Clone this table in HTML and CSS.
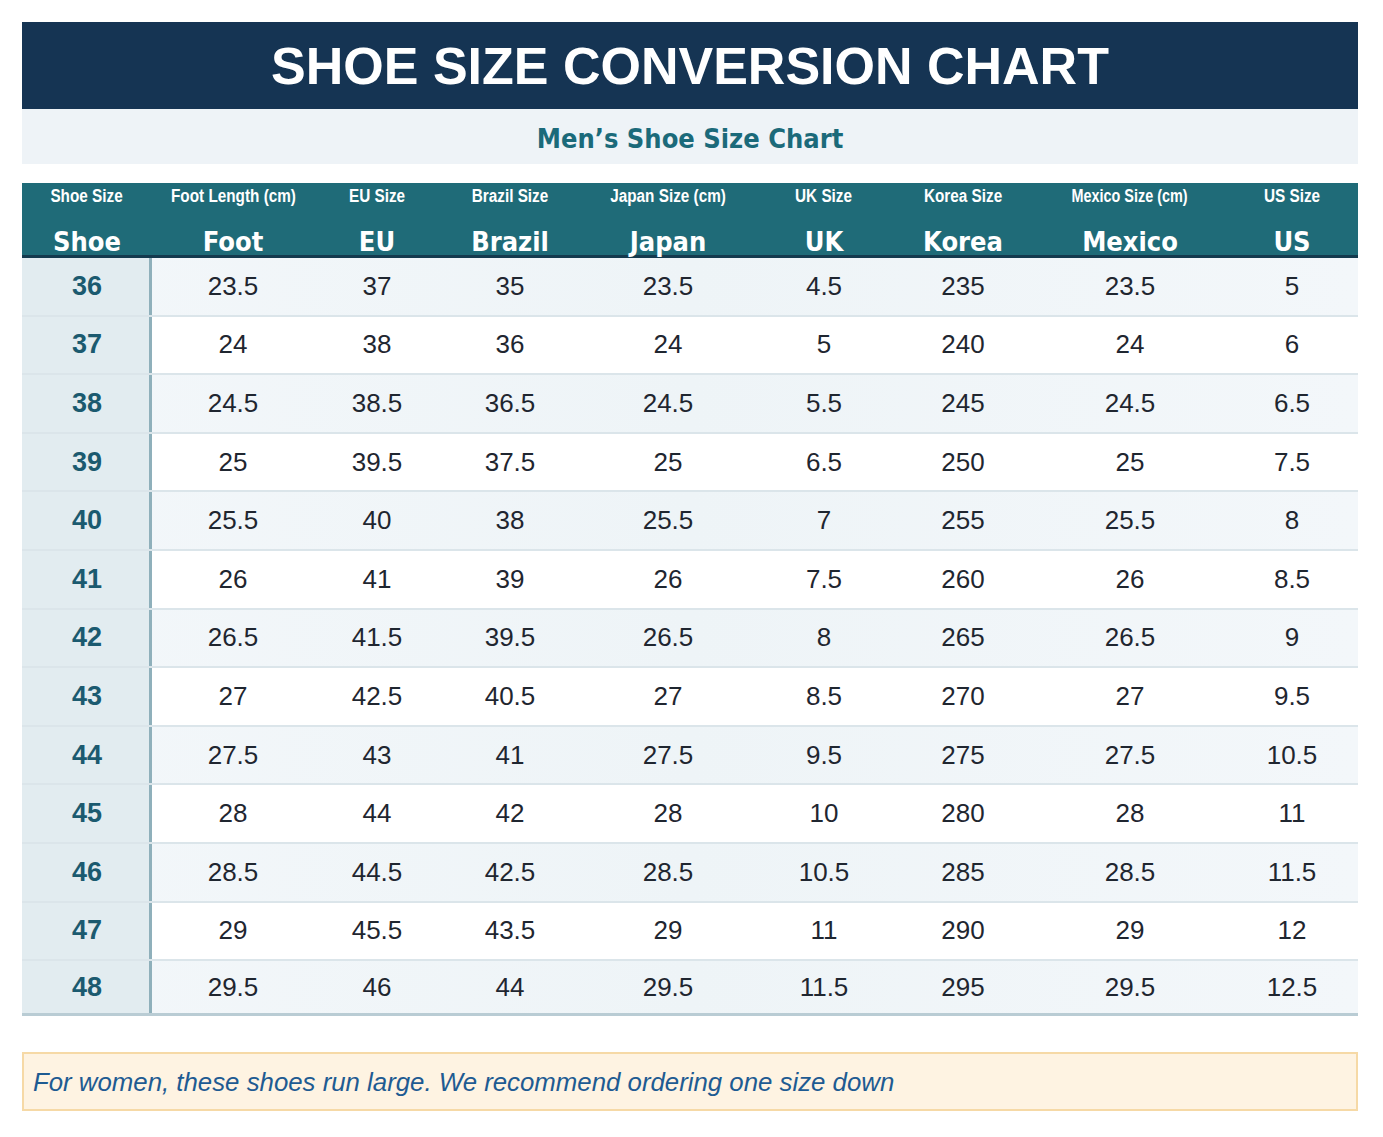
FILE: index.html
```html
<!DOCTYPE html>
<html lang="en">
<head>
<meta charset="utf-8">
<title>Shoe Size Conversion Chart</title>
<link rel="stylesheet" href="styles.css">
</head>
<body>
<div class="page">
  <header class="title-bar"><h1>SHOE SIZE CONVERSION CHART</h1></header>
  <div class="subtitle-bar"><h2>Men’s Shoe Size Chart</h2></div>

  <div class="chart">
    <div class="row head">
      <div class="hcell"><span class="small">Shoe Size</span><span class="big">Shoe</span></div>
      <div class="hcell"><span class="small">Foot Length (cm)</span><span class="big">Foot</span></div>
      <div class="hcell"><span class="small">EU Size</span><span class="big">EU</span></div>
      <div class="hcell"><span class="small">Brazil Size</span><span class="big">Brazil</span></div>
      <div class="hcell"><span class="small">Japan Size (cm)</span><span class="big">Japan</span></div>
      <div class="hcell"><span class="small">UK Size</span><span class="big">UK</span></div>
      <div class="hcell"><span class="small">Korea Size</span><span class="big">Korea</span></div>
      <div class="hcell"><span class="small narrow">Mexico Size (cm)</span><span class="big">Mexico</span></div>
      <div class="hcell"><span class="small">US Size</span><span class="big">US</span></div>
    </div>

    <div class="row body alt"><div class="cell key">36</div><div class="cell">23.5</div><div class="cell">37</div><div class="cell">35</div><div class="cell">23.5</div><div class="cell">4.5</div><div class="cell">235</div><div class="cell">23.5</div><div class="cell">5</div></div>
    <div class="row body"><div class="cell key">37</div><div class="cell">24</div><div class="cell">38</div><div class="cell">36</div><div class="cell">24</div><div class="cell">5</div><div class="cell">240</div><div class="cell">24</div><div class="cell">6</div></div>
    <div class="row body alt"><div class="cell key">38</div><div class="cell">24.5</div><div class="cell">38.5</div><div class="cell">36.5</div><div class="cell">24.5</div><div class="cell">5.5</div><div class="cell">245</div><div class="cell">24.5</div><div class="cell">6.5</div></div>
    <div class="row body"><div class="cell key">39</div><div class="cell">25</div><div class="cell">39.5</div><div class="cell">37.5</div><div class="cell">25</div><div class="cell">6.5</div><div class="cell">250</div><div class="cell">25</div><div class="cell">7.5</div></div>
    <div class="row body alt"><div class="cell key">40</div><div class="cell">25.5</div><div class="cell">40</div><div class="cell">38</div><div class="cell">25.5</div><div class="cell">7</div><div class="cell">255</div><div class="cell">25.5</div><div class="cell">8</div></div>
    <div class="row body"><div class="cell key">41</div><div class="cell">26</div><div class="cell">41</div><div class="cell">39</div><div class="cell">26</div><div class="cell">7.5</div><div class="cell">260</div><div class="cell">26</div><div class="cell">8.5</div></div>
    <div class="row body alt"><div class="cell key">42</div><div class="cell">26.5</div><div class="cell">41.5</div><div class="cell">39.5</div><div class="cell">26.5</div><div class="cell">8</div><div class="cell">265</div><div class="cell">26.5</div><div class="cell">9</div></div>
    <div class="row body"><div class="cell key">43</div><div class="cell">27</div><div class="cell">42.5</div><div class="cell">40.5</div><div class="cell">27</div><div class="cell">8.5</div><div class="cell">270</div><div class="cell">27</div><div class="cell">9.5</div></div>
    <div class="row body alt"><div class="cell key">44</div><div class="cell">27.5</div><div class="cell">43</div><div class="cell">41</div><div class="cell">27.5</div><div class="cell">9.5</div><div class="cell">275</div><div class="cell">27.5</div><div class="cell">10.5</div></div>
    <div class="row body"><div class="cell key">45</div><div class="cell">28</div><div class="cell">44</div><div class="cell">42</div><div class="cell">28</div><div class="cell">10</div><div class="cell">280</div><div class="cell">28</div><div class="cell">11</div></div>
    <div class="row body alt"><div class="cell key">46</div><div class="cell">28.5</div><div class="cell">44.5</div><div class="cell">42.5</div><div class="cell">28.5</div><div class="cell">10.5</div><div class="cell">285</div><div class="cell">28.5</div><div class="cell">11.5</div></div>
    <div class="row body"><div class="cell key">47</div><div class="cell">29</div><div class="cell">45.5</div><div class="cell">43.5</div><div class="cell">29</div><div class="cell">11</div><div class="cell">290</div><div class="cell">29</div><div class="cell">12</div></div>
    <div class="row body alt last"><div class="cell key">48</div><div class="cell">29.5</div><div class="cell">46</div><div class="cell">44</div><div class="cell">29.5</div><div class="cell">11.5</div><div class="cell">295</div><div class="cell">29.5</div><div class="cell">12.5</div></div>
  </div>

  <p class="note">For women, these shoes run large. We recommend ordering one size down</p>
</div>
</body>
</html>
```

FILE: styles.css
```css
* { box-sizing: border-box; }

html, body {
  margin: 0;
  padding: 0;
  background: #ffffff;
}

body {
  padding: 22px 25px 0 22px;
  font-family: "Liberation Sans", Arial, sans-serif;
}

.page {
  width: 1336px;
}

.title-bar {
  height: 87px;
  background: #153453;
  display: flex;
  align-items: center;
  justify-content: center;
}

.title-bar h1 {
  margin: 0;
  color: #ffffff;
  font-family: "Liberation Sans", Arial, sans-serif;
  font-weight: 700;
  font-size: 52px;
  line-height: 1;
  padding-top: 0;
}

.subtitle-bar {
  height: 55px;
  background: #eef3f7;
  display: flex;
  align-items: center;
  justify-content: center;
}

.subtitle-bar h2 {
  margin: 0;
  color: #1b6a7a;
  font-family: "DejaVu Sans Condensed", "DejaVu Sans", sans-serif;
  font-stretch: condensed;
  font-weight: 700;
  font-size: 27px;
  line-height: 1;
  padding-top: 4px;
}

.chart {
  margin-top: 19px;
}

.row {
  display: grid;
  grid-template-columns: 130px 162px 126px 140px 176px 136px 142px 192px 132px;
}

.head {
  height: 75px;
  background: #1f6b78;
  border-bottom: 3px solid #143a4e;
}

.hcell {
  display: flex;
  flex-direction: column;
  align-items: center;
  color: #ffffff;
}

.small {
  display: inline-block;
  font-family: "Liberation Sans", Arial, sans-serif;
  font-weight: 700;
  font-size: 18px;
  line-height: 26px;
  height: 26px;
  white-space: nowrap;
  transform: scaleX(0.85);
}

.small.narrow {
  transform: scaleX(0.8);
}

.big {
  font-family: "DejaVu Sans Condensed", "DejaVu Sans", sans-serif;
  font-stretch: condensed;
  font-weight: 700;
  font-size: 27px;
  line-height: 28px;
  height: 28px;
  margin-top: 19px;
}

.body {
  height: 58.6px;
  background: #ffffff;
  border-bottom: 2px solid #dbe5ea;
}

.body.alt {
  background: linear-gradient(90deg, #f3f7fa 0%, #eef4f7 50%, #f3f7fa 100%);
}

.body.last {
  height: 55px;
  border-bottom: 3px solid #b9ccd4;
}

.cell {
  display: flex;
  align-items: center;
  justify-content: center;
  font-family: "Liberation Sans", Arial, sans-serif;
  font-size: 26px;
  color: #1f2630;
}

.cell.key {
  background: #e2ecf0;
  border-right: 3px solid #8fb0bb;
  font-weight: 700;
  font-size: 27px;
  color: #1b5a6f;
  padding-left: 3px;
}

.note {
  margin: 36px 0 0 0;
  height: 59px;
  background: #fef3e2;
  border: 2px solid #f6d9a6;
  display: flex;
  align-items: center;
  padding: 2px 0 0 9px;
  font-family: "Liberation Sans", Arial, sans-serif;
  font-style: italic;
  font-size: 25.8px;
  color: #1e5b92;
}
```
